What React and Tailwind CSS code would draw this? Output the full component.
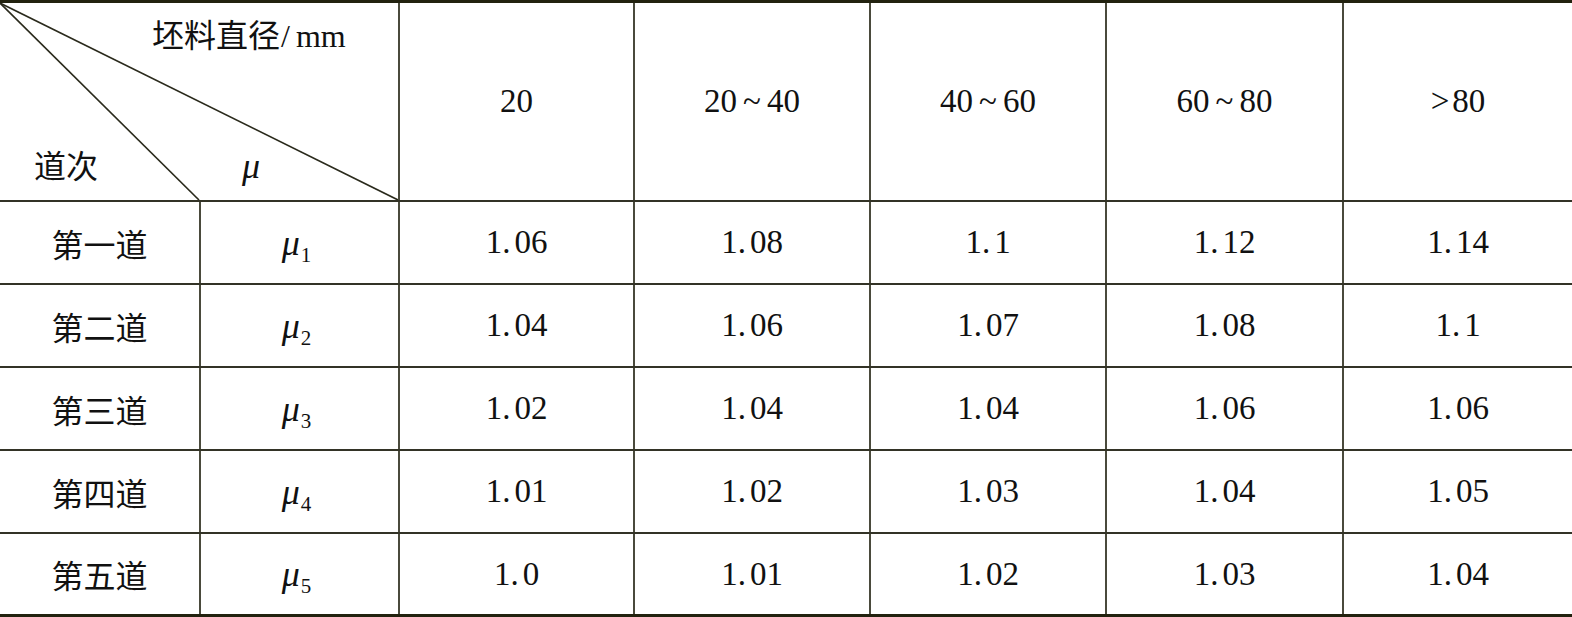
import React from "react";

const serif = { fontFamily: '"Liberation Serif", "Times New Roman", serif' };
const cjk = { fontFamily: '"Noto Sans CJK SC", "Liberation Serif", serif' };

const heads = [
  { a: "20" },
  { a: "20", sep: "~", b: "40" },
  { a: "40", sep: "~", b: "60" },
  { a: "60", sep: "~", b: "80" },
  { pre: ">", a: "80" },
];

const rows = [
  ["第一道", "1", ["1.06", "1.08", "1.1", "1.12", "1.14"]],
  ["第二道", "2", ["1.04", "1.06", "1.07", "1.08", "1.1"]],
  ["第三道", "3", ["1.02", "1.04", "1.04", "1.06", "1.06"]],
  ["第四道", "4", ["1.01", "1.02", "1.03", "1.04", "1.05"]],
  ["第五道", "5", ["1.0", "1.01", "1.02", "1.03", "1.04"]],
];

function Num({ v }) {
  const [a, b] = v.split(".");
  return (
    <span className="text-[33px] leading-none text-[#111]" style={serif}>
      {a}.<span className="ml-[4px]">{b}</span>
    </span>
  );
}

function Head({ h }) {
  return (
    <span className="text-[33px] leading-none text-[#111]" style={serif}>
      {h.pre && <span className="mr-[3px]">{h.pre}</span>}
      {h.a}
      {h.sep && <span className="mx-[6px]">{h.sep}</span>}
      {h.b}
    </span>
  );
}

function Mu({ sub }) {
  return (
    <span className="text-[#111] leading-none" style={serif}>
      <span className="italic text-[36px]">μ</span>
      {sub && <span className="text-[21px] relative top-[7px] ml-[1px]">{sub}</span>}
    </span>
  );
}

export default function App() {
  const cols = "grid grid-cols-[199px_199px_235px_236px_236px_237px_1fr]";
  return (
    <div className="w-[1572px] h-[617px] bg-white overflow-hidden">
      <div className="border-t-[3px] border-b-[3px] border-[#22220f]">
        {/* header row */}
        <div className={`${cols} h-[197px]`}>
          <div className="col-span-2 relative h-full">
            <svg className="absolute inset-0" width="398" height="197" viewBox="0 0 398 197">
              <line x1="0" y1="0" x2="199" y2="197" stroke="#2a2a1c" strokeWidth="1.6" />
              <line x1="0" y1="0" x2="398" y2="197" stroke="#2a2a1c" strokeWidth="1.6" />
            </svg>
            <div className="relative flex flex-col justify-between h-full pt-[14px] pb-[16px]">
              <div className="pl-[152px] flex items-baseline text-[32px] leading-none text-[#111]">
                <span style={cjk}>坯料直径</span>
                <span style={serif} className="ml-[1px]">/</span>
                <span style={serif} className="ml-[6px]">mm</span>
              </div>
              <div className="flex items-baseline leading-none">
                <span className="pl-[34px] w-[242px] text-[32px] text-[#111]" style={cjk}>道次</span>
                <Mu />
              </div>
            </div>
          </div>
          {heads.map((h, i) => (
            <div key={i} className="border-l-2 border-[#4a4a3c] flex items-center justify-center">
              <Head h={h} />
            </div>
          ))}
        </div>
        {rows.map(([name, sub, vals], ri) => (
          <div key={ri} className={`${cols} ${ri === 4 ? "h-[82px]" : "h-[83px]"} border-t-2 border-[#333326]`}>
            <div className="flex items-center justify-center">
              <span className="text-[32px] leading-none text-[#111]" style={cjk}>{name}</span>
            </div>
            <div className="border-l-2 border-[#4a4a3c] flex items-center justify-center pr-[6px]">
              <Mu sub={sub} />
            </div>
            {vals.map((v, i) => (
              <div key={i} className="border-l-2 border-[#4a4a3c] flex items-center justify-center">
                <Num v={v} />
              </div>
            ))}
          </div>
        ))}
      </div>
    </div>
  );
}
